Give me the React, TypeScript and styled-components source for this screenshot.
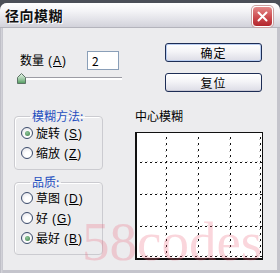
import React from 'react';
import styled, { createGlobalStyle } from 'styled-components';

const Global = createGlobalStyle`
  html, body { margin: 0; padding: 0; background: #4b4f58; }
  body { width: 280px; height: 273px; overflow: hidden; font-family: "Noto Sans CJK SC", "Noto Sans", sans-serif; }
  * { box-sizing: border-box; }
`;

const CJK = `"Noto Sans CJK SC", "Noto Sans", sans-serif`;

const Page = styled.div`
  width: 280px;
  height: 273px;
  padding-top: 3px;
  background: #4b4f58;
`;

const Window = styled.div`
  position: relative;
  width: 280px;
  height: 270px;
  display: flex;
  flex-direction: column;
  background: linear-gradient(90deg, #a8a8b2 0, #d6d6dc 1px, #c4c4cc 3px);
  border-radius: 7px 7px 0 0;
  overflow: hidden;
`;

const TitleBar = styled.div`
  height: 25px;
  flex: none;
  display: flex;
  align-items: center;
  justify-content: space-between;
  padding: 0 7px 0 5px;
  background: linear-gradient(#ffffff, #f3f3f6 35%, #e2e2e8 70%, #d2d2da);
  border-bottom: 1px solid #b4b4bc;
`;

const Title = styled.div`
  font: bold 14px/14px ${CJK};
  color: #111;
  letter-spacing: 0.5px;
  text-shadow: 1px 1px 0 #fff;
`;

const CloseButton = styled.div`
  width: 21px;
  height: 21px;
  margin-top: 3px;
  border: 1px solid #fff;
  border-radius: 4px;
  background: linear-gradient(#e48a8a, #cc4a4e 55%, #b3262d);
  display: flex;
  align-items: center;
  justify-content: center;
  box-shadow: 0 0 0 1px #c9a0a0;
`;

const Body = styled.div`
  flex: 1;
  margin: 0 3px 3px 3px;
  background: #ececee;
  display: flex;
  flex-direction: column;
`;

const TopSection = styled.div`
  display: flex;
  justify-content: space-between;
  padding: 15px 15px 0 17px;
`;

const AmountColumn = styled.div`
  width: 102px;
  padding-top: 8px;
  display: flex;
  flex-direction: column;
`;

const AmountRow = styled.div`
  display: flex;
  align-items: center;
  height: 19px;
`;

const FieldLabel = styled.span`
  width: 67px;
  font: 12px/12px ${CJK};
  color: #000;
`;

const Hotkey = styled.span`
  font: 12px/12px "Liberation Sans", sans-serif;
  letter-spacing: 1px;
  margin-left: 4px;
`;

const NumberBox = styled.div`
  width: 32px;
  height: 19px;
  border: 1px solid #8a9fb8;
  background: #fff;
  padding-left: 4px;
  display: flex;
  align-items: center;
  font: 12px/12px ${CJK};
  color: #000;
`;

const Slider = styled.div`
  margin-top: 3px;
  width: 102px;
  height: 11px;
  display: flex;
  background: linear-gradient(
    to bottom,
    transparent 4px,
    #9c9ca4 4px,
    #9c9ca4 5px,
    #ffffff 5px,
    #ffffff 7px,
    transparent 7px
  );
`;

const Thumb = styled.svg`
  margin-left: -3px;
  flex: none;
`;

const ButtonColumn = styled.div`
  display: flex;
  flex-direction: column;
  gap: 11px;
`;

const Button = styled.button<{ $default?: boolean }>`
  width: 97px;
  height: 19px;
  padding: 0;
  border: 1px solid #1d2d55;
  border-radius: 3px;
  background: linear-gradient(#ffffff, #f4f4f7 45%, #dcdce6);
  box-shadow: ${p => (p.$default ? 'inset 0 0 0 1px #b9cdf0' : 'inset 0 -1px 0 #c8c8d4')};
  font: 12px/12px ${CJK};
  color: #000;
  letter-spacing: 1px;
`;

const BottomSection = styled.div`
  display: flex;
  gap: 32px;
  margin-top: 18px;
  padding-left: 11px;
`;

const GroupColumn = styled.div`
  width: 89px;
  display: flex;
  flex-direction: column;
  gap: 6px;
`;

const Group = styled.fieldset<{ $top: number }>`
  margin: 0;
  padding: ${p => p.$top}px 0 6px 6px;
  border: 1px solid #cbcbd0;
  border-radius: 4px;
  box-shadow: inset 1px 1px 0 #fff;
  min-inline-size: 0;
`;

const Legend = styled.legend`
  margin-left: 9px;
  padding: 0 2px;
  font: 12px/12px ${CJK};
  color: #1f4fbf;
`;

const RadioRow = styled.div`
  height: 20px;
  display: flex;
  align-items: center;
  gap: 3px;
  font: 12px/12px ${CJK};
  color: #000;
`;

const RadioCircle = styled.span<{ $checked?: boolean }>`
  width: 12px;
  height: 12px;
  flex: none;
  border-radius: 50%;
  border: 1px solid #3b4b6b;
  background: radial-gradient(circle at 60% 65%, #ffffff 30%, #dedee4);
  display: flex;
  align-items: center;
  justify-content: center;
  &::after {
    content: '';
    width: 5px;
    height: 5px;
    border-radius: 50%;
    background: ${p => (p.$checked ? 'radial-gradient(circle at 40% 35%, #8fc79a, #3e7d4a)' : 'transparent')};
  }
`;

const PreviewColumn = styled.div`
  width: 128px;
  display: flex;
  flex-direction: column;
`;

const PreviewLabel = styled.div`
  font: 12px/12px ${CJK};
  color: #000;
`;

const PreviewBox = styled.div`
  margin-top: 10px;
  width: 128px;
  height: 128px;
  border: 2px solid #111;
  border-top-width: 1px;
  border-right-width: 1px;
  background: #fff;
  display: flex;
`;

const Watermark = styled.div`
  position: absolute;
  left: 82px;
  top: 211px;
  font: 55px/55px "Liberation Serif", serif;
  color: rgba(236, 96, 120, 0.26);
  pointer-events: none;
  white-space: nowrap;
`;

const gridLines = [29, 61, 93, 123];

function BlurGrid() {
  const ticks: React.ReactNode[] = [];
  gridLines.forEach((g, gi) => {
    for (let y = 4; y < 124; y += 6) {
      ticks.push(<rect key={`v${gi}-${y}`} x={g} y={y} width={1} height={2} fill="#111" />);
      ticks.push(<rect key={`vh${gi}-${y}`} x={g - 1} y={y + 2} width={1} height={1} fill="#c4c4c4" />);
    }
    for (let x = 3; x < 124; x += 5) {
      ticks.push(<rect key={`h${gi}-${x}`} x={x} y={g} width={2} height={1} fill="#111" />);
      ticks.push(<rect key={`hh${gi}-${x}`} x={x + 2} y={g - 1} width={1} height={1} fill="#c4c4c4" />);
    }
  });
  return (
    <svg width="125" height="125" viewBox="0 0 125 125">
      {ticks}
    </svg>
  );
}

function Radio({ label, hotkey, checked }: { label: string; hotkey: string; checked?: boolean }) {
  return (
    <RadioRow>
      <RadioCircle $checked={checked} />
      <span>
        {label}
        <Hotkey>
          (<u>{hotkey}</u>)
        </Hotkey>
      </span>
    </RadioRow>
  );
}

export default function App() {
  return (
    <Page>
      <Global />
      <Window>
        <TitleBar>
          <Title>径向模糊</Title>
          <CloseButton>
            <svg width="11" height="11" viewBox="0 0 11 11">
              <path d="M1.5 1.5 L9.5 9.5 M9.5 1.5 L1.5 9.5" stroke="#fff" strokeWidth="2" strokeLinecap="round" />
            </svg>
          </CloseButton>
        </TitleBar>
        <Body>
          <TopSection>
            <AmountColumn>
              <AmountRow>
                <FieldLabel>
                  数量
                  <Hotkey>
                    (<u>A</u>)
                  </Hotkey>
                </FieldLabel>
                <NumberBox>2</NumberBox>
              </AmountRow>
              <Slider>
                <Thumb width="9" height="11" viewBox="0 0 9 11">
                  <defs>
                    <linearGradient id="thumbFill" x1="0" y1="0" x2="0" y2="1">
                      <stop offset="0" stopColor="#e9f3ea" />
                      <stop offset="0.55" stopColor="#9fcaa6" />
                      <stop offset="1" stopColor="#4e9a5c" />
                    </linearGradient>
                  </defs>
                  <path d="M4.5 0.5 L8.5 4.5 L8.5 10.5 L0.5 10.5 L0.5 4.5 Z" fill="url(#thumbFill)" stroke="#5d7466" />
                </Thumb>
              </Slider>
            </AmountColumn>
            <ButtonColumn>
              <Button $default>确定</Button>
              <Button>复位</Button>
            </ButtonColumn>
          </TopSection>
          <BottomSection>
            <GroupColumn>
              <Group $top={1}>
                <Legend>模糊方法:</Legend>
                <Radio label="旋转" hotkey="S" checked />
                <Radio label="缩放" hotkey="Z" />
              </Group>
              <Group $top={0}>
                <Legend>品质:</Legend>
                <Radio label="草图" hotkey="D" />
                <Radio label="好" hotkey="G" />
                <Radio label="最好" hotkey="B" checked />
              </Group>
            </GroupColumn>
            <PreviewColumn>
              <PreviewLabel>中心模糊</PreviewLabel>
              <PreviewBox>
                <BlurGrid />
              </PreviewBox>
            </PreviewColumn>
          </BottomSection>
        </Body>
        <Watermark>58codes</Watermark>
      </Window>
    </Page>
  );
}
